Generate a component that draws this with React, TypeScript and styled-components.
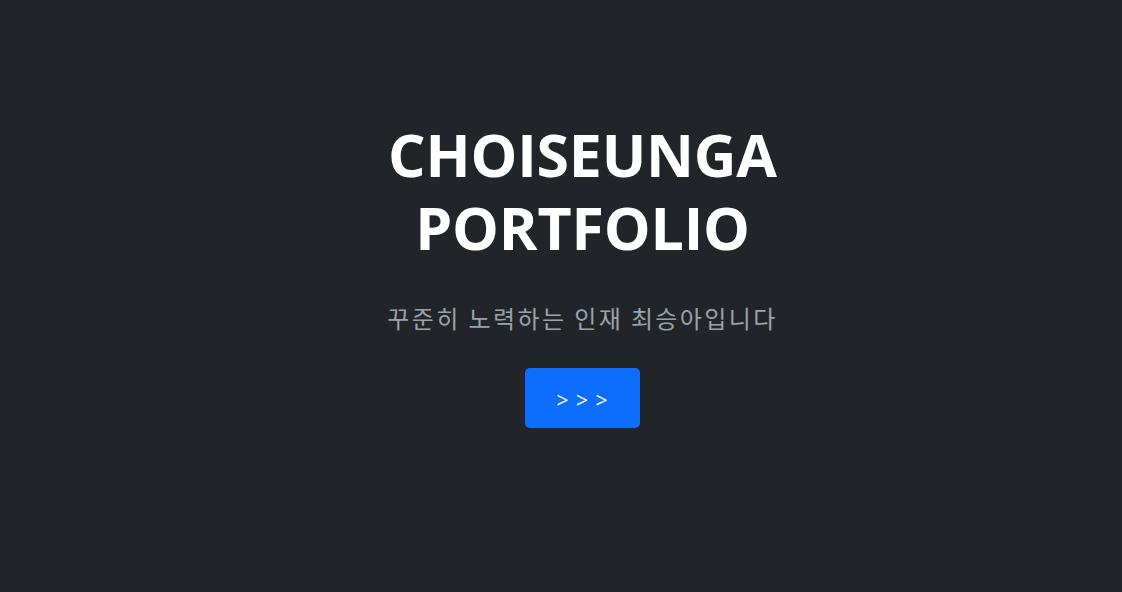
import React from "react";
import styled, { createGlobalStyle } from "styled-components";

const GlobalStyle = createGlobalStyle`
  html, body {
    margin: 0;
    padding: 0;
    background: #212529;
  }
  body {
    font-family: "Open Sans", "Noto Sans", "Noto Sans CJK KR", sans-serif;
  }
`;

export default function App() {
  return (
    <>
      <GlobalStyle />
      <Root>
        <Hero>
          <Title>
            CHOISEUNGA
            <br />
            PORTFOLIO
          </Title>
          <Lead>꾸준히 노력하는 인재 최승아입니다</Lead>
          <NextButton type="button">&gt; &gt; &gt;</NextButton>
        </Hero>
      </Root>
    </>
  );
}

const Root = styled.main`
  box-sizing: border-box;
  width: 100%;
  height: 592px;
  padding-left: 43px;
  background: #212529;
  display: flex;
  justify-content: center;
`;

const Hero = styled.section`
  display: flex;
  flex-direction: column;
  align-items: center;
  padding-top: 118px;
  text-align: center;
`;

const Title = styled.h1`
  margin: 0;
  color: #ffffff;
  font-family: "Open Sans", sans-serif;
  font-weight: 700;
  font-size: 59px;
  line-height: 73px;
  letter-spacing: -0.2px;
`;

const Lead = styled.p`
  margin: 36px 0 0;
  color: #9ca2a8;
  font-family: "Noto Sans CJK KR", "Noto Sans", sans-serif;
  font-weight: 400;
  font-size: 24px;
  line-height: 36px;
  letter-spacing: 2.4px;
`;

const NextButton = styled.button`
  margin-top: 32px;
  box-sizing: border-box;
  width: 115px;
  height: 60px;
  padding: 3px 0 0;
  border: none;
  border-radius: 5px;
  background: #0d6efd;
  color: #ffffff;
  font-family: "Open Sans", sans-serif;
  font-size: 21px;
  letter-spacing: 1px;
  cursor: pointer;
`;
